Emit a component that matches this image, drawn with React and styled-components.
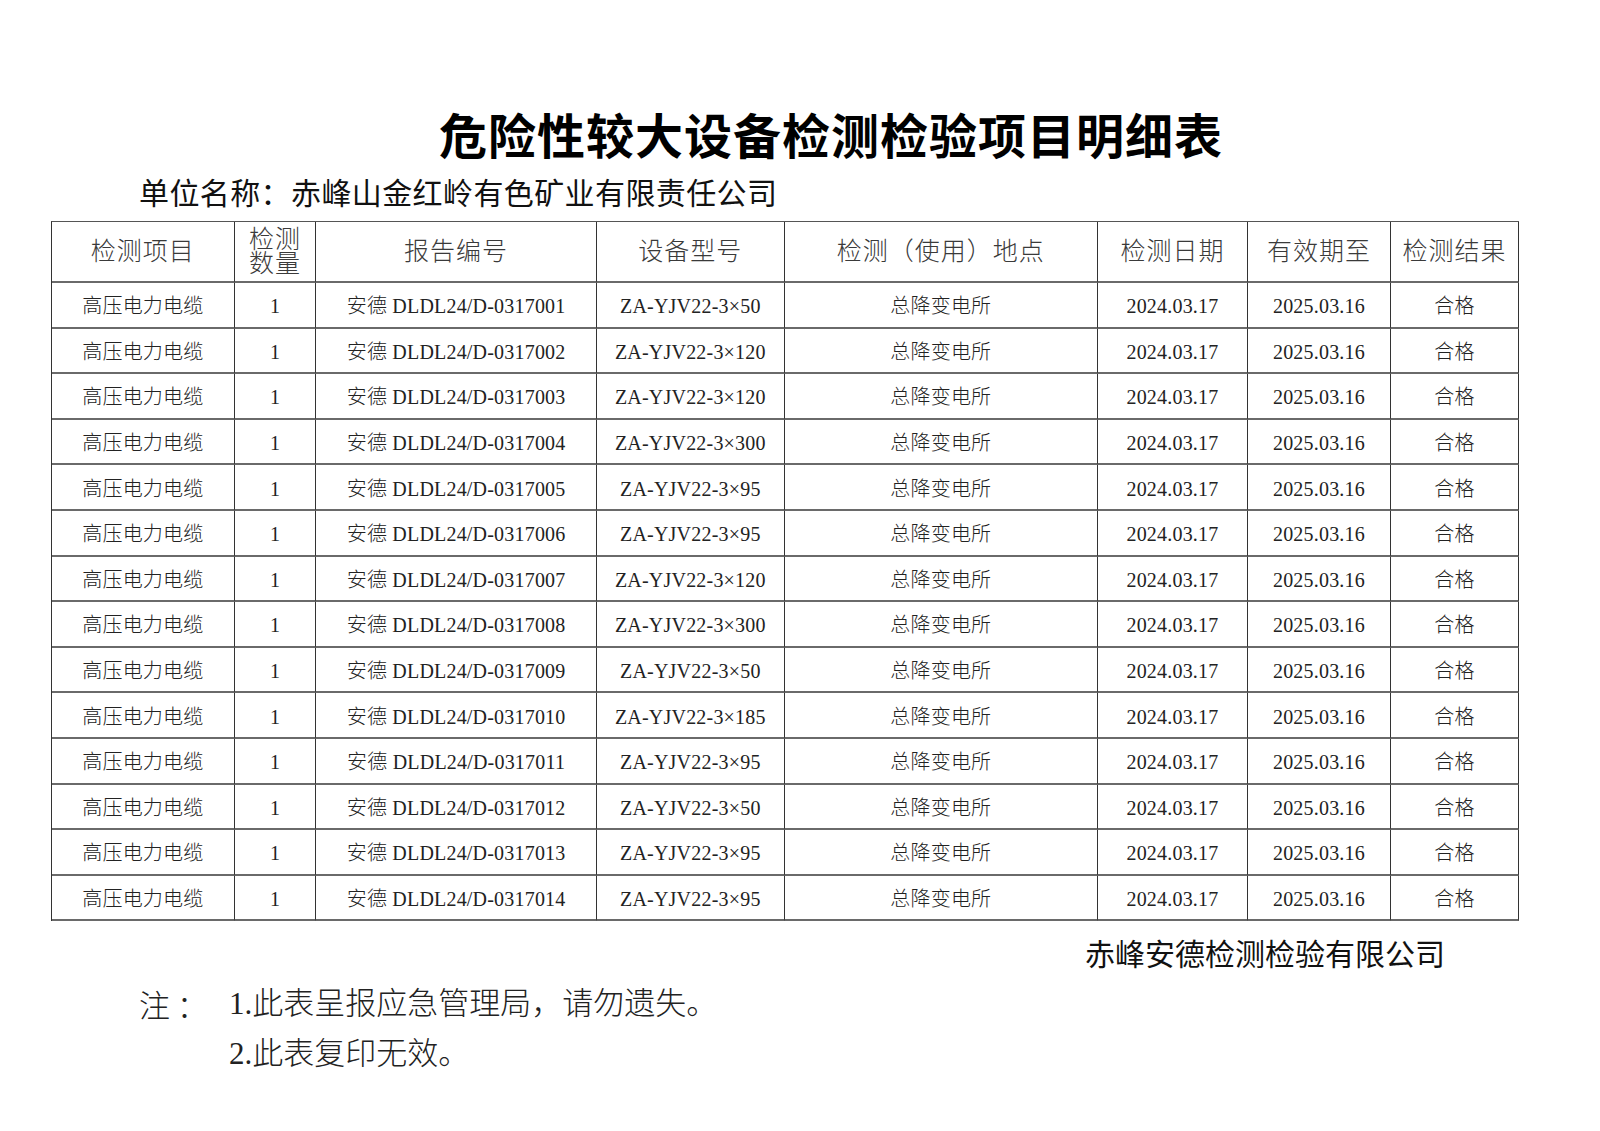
import React from "react";
import styled, { createGlobalStyle } from "styled-components";

const GlobalStyle = createGlobalStyle`
  html, body {
    margin: 0;
    padding: 0;
    background: #fff;
  }
  body {
    font-family: "Liberation Serif", "Noto Sans CJK SC", serif;
    color: #111;
  }
`;

const Page = styled.div`
  width: 1600px;
  min-height: 1131px;
  padding-top: 104px;
  box-sizing: border-box;
`;

const Title = styled.h1`
  margin: 0;
  padding-left: 62px;
  text-align: center;
  font-family: "Noto Sans CJK SC", sans-serif;
  font-size: 48px;
  font-weight: 700;
  line-height: 58px;
  color: #000;
  letter-spacing: 1px;
`;

const Unit = styled.div`
  margin-top: 9px;
  padding-left: 139px;
  font-family: "Noto Sans CJK SC", sans-serif;
  font-size: 30px;
  line-height: 40px;
  letter-spacing: 0.4px;
  color: #111;
`;

const Sheet = styled.div`
  margin: 10px 0 0 51px;
  width: 1468px;
`;

const Grid = styled.div`
  display: grid;
  grid-template-columns: 182.7px 81.6px 280.7px 187.7px 313.3px 150px 143px 128px;
  border-left: 1px solid #333;
  border-top: 1px solid #555;
`;

const Cell = styled.div`
  box-sizing: border-box;
  display: flex;
  align-items: center;
  justify-content: center;
  text-align: center;
  height: ${(p) => (p.$head ? "61px" : "45.6px")};
  padding-top: ${(p) => (p.$head ? "0" : "3px")};
  border-right: 1px solid #333;
  border-bottom: 2px solid #6a6a6a;
  font-size: ${(p) => (p.$head ? "25px" : "20px")};
  font-weight: 300;
  line-height: ${(p) => (p.$stack ? "24px" : "1.2")};
  color: ${(p) => (p.$head ? "#3a3a3a" : "#222")};
  letter-spacing: ${(p) => (p.$head ? "1px" : "0.2px")};
  white-space: nowrap;
`;

const Company = styled.div`
  margin-top: 11px;
  padding-right: 74px;
  text-align: right;
  font-family: "Noto Sans CJK SC", sans-serif;
  font-size: 30px;
  line-height: 40px;
  color: #111;
`;

const Notes = styled.div`
  margin-top: 7px;
  padding-left: 139px;
  display: grid;
  grid-template-columns: 90px auto;
  font-size: 31px;
  font-weight: 300;
  line-height: 50px;
  color: #222;
`;

const NoteLabel = styled.div`
  font-family: "Noto Sans CJK SC", sans-serif;
  white-space: pre;
`;

const NoteList = styled.div`
  display: flex;
  flex-direction: column;
`;

const headers = [
  "检测项目",
  "检测\n数量",
  "报告编号",
  "设备型号",
  "检测（使用）地点",
  "检测日期",
  "有效期至",
  "检测结果",
];

const models = [
  "50", "120", "120", "300", "95", "95", "120",
  "300", "50", "185", "95", "50", "95", "95",
];

const rows = models.map((m, i) => [
  "高压电力电缆",
  "1",
  `安德 DLDL24/D-03170${String(i + 1).padStart(2, "0")}`,
  `ZA-YJV22-3×${m}`,
  "总降变电所",
  "2024.03.17",
  "2025.03.16",
  "合格",
]);

export default function App() {
  return (
    <Page>
      <GlobalStyle />
      <Title>危险性较大设备检测检验项目明细表</Title>
      <Unit>单位名称：赤峰山金红岭有色矿业有限责任公司</Unit>
      <Sheet>
        <Grid>
          {headers.map((h) => (
            <Cell key={h} $head $stack={h.includes("\n")}>
              {h.includes("\n") ? (
                <span>
                  {h.split("\n")[0]}
                  <br />
                  {h.split("\n")[1]}
                </span>
              ) : (
                h
              )}
            </Cell>
          ))}
          {rows.map((r, i) =>
            r.map((v, j) => <Cell key={`${i}-${j}`}>{v}</Cell>)
          )}
        </Grid>
        <Company>赤峰安德检测检验有限公司</Company>
      </Sheet>
      <Notes>
        <NoteLabel>注 ：</NoteLabel>
        <NoteList>
          <div>1.此表呈报应急管理局，请勿遗失。</div>
          <div>2.此表复印无效。</div>
        </NoteList>
      </Notes>
    </Page>
  );
}
